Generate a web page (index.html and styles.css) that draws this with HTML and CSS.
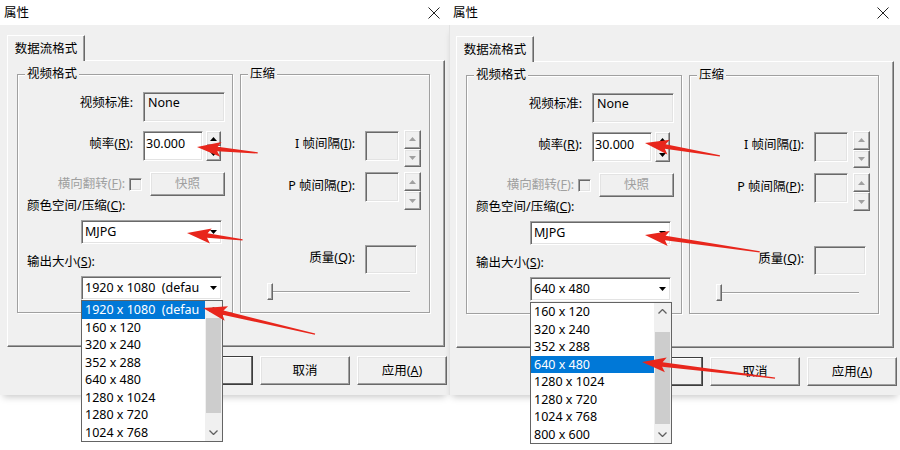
FILE: index.html
```html
<!DOCTYPE html>
<html lang="zh-CN">
<head>
<meta charset="utf-8">
<title>属性</title>
<link rel="stylesheet" href="styles.css">
</head>
<body>
<div class="screen">

  <div class="dialog d1">
    <div class="titlebar">
      <span class="title">属性</span>
      <svg class="close" width="12" height="12" viewBox="0 0 12 12"><path d="M0.5 0.5L11.5 11.5M11.5 0.5L0.5 11.5"/></svg>
    </div>
    <div class="client">
      <div class="tabs"><div class="tab">数据流格式</div></div>
      <div class="panel">
        <div class="group g-video">
          <span class="legend">视频格式</span>
          <div class="row r-std"><span class="lbl">视频标准:</span><div class="static sunken">None</div></div>
          <div class="row r-fps"><span class="lbl">帧率(<u>R</u>):</span><div class="edit sunken">30.000</div>
            <div class="spin"><span class="sbtn raised"><svg class="tri" width="7" height="4" viewBox="0 0 7 4"><path d="M0 4L3.5 0L7 4Z"/></svg></span><span class="sbtn raised"><svg class="tri" width="7" height="4" viewBox="0 0 7 4"><path d="M0 0L7 0L3.5 4Z"/></svg></span></div>
          </div>
          <div class="row r-flip"><span class="lbl lbl-flip dis">横向翻转(<u>F</u>):</span><span class="check sunken"></span><span class="btn raised snap dis">快照</span></div>
          <div class="line-lbl r-cs">颜色空间/压缩(<u>C</u>):</div>
          <div class="combo sunken"><span class="val">MJPG</span><span class="drop"><svg class="tri" width="7" height="4" viewBox="0 0 7 4"><path d="M0 0L7 0L3.5 4Z"/></svg></span></div>
          <div class="line-lbl r-out">输出大小(<u>S</u>):</div>
          <div class="combo sunken"><span class="val">1920 x 1080&nbsp;&nbsp;(defau</span><span class="drop"><svg class="tri" width="7" height="4" viewBox="0 0 7 4"><path d="M0 0L7 0L3.5 4Z"/></svg></span></div>
        </div>
        <div class="group g-comp">
          <span class="legend">压缩</span>
          <div class="row r-i"><span class="lbl lbl-c">I 帧间隔(<u>I</u>):</span><div class="edit sunken dedit"></div>
            <div class="spin spin2"><span class="sbtn raised"><svg class="tri gray" width="7" height="4" viewBox="0 0 7 4"><path d="M0 4L3.5 0L7 4Z"/></svg></span><span class="sbtn raised"><svg class="tri gray" width="7" height="4" viewBox="0 0 7 4"><path d="M0 0L7 0L3.5 4Z"/></svg></span></div>
          </div>
          <div class="row r-p"><span class="lbl lbl-c">P 帧间隔(<u>P</u>):</span><div class="edit sunken dedit"></div>
            <div class="spin spin2 spin3"><span class="sbtn raised"><svg class="tri gray" width="7" height="4" viewBox="0 0 7 4"><path d="M0 4L3.5 0L7 4Z"/></svg></span><span class="sbtn raised"><svg class="tri gray" width="7" height="4" viewBox="0 0 7 4"><path d="M0 0L7 0L3.5 4Z"/></svg></span></div>
          </div>
          <div class="row r-q"><span class="lbl lbl-c">质量(<u>Q</u>):</span><div class="edit sunken dedit qedit"></div></div>
          <div class="slider"><span class="thumb"></span><span class="track"></span></div>
        </div>
      </div>
      <div class="buttons">
        <span class="btn raised dbtn">确定</span>
        <span class="btn raised">取消</span>
        <span class="btn raised">应用(<u>A</u>)</span>
      </div>
    </div>
    <div class="droplist dl1">
      <div class="items">
        <div class="item sel">1920 x 1080&nbsp;&nbsp;(defau</div>
        <div class="item">160 x 120</div>
        <div class="item">320 x 240</div>
        <div class="item">352 x 288</div>
        <div class="item">640 x 480</div>
        <div class="item">1280 x 1024</div>
        <div class="item">1280 x 720</div>
        <div class="item">1024 x 768</div>
      </div>
      <div class="sbar">
        <span class="sarrow"><svg width="9" height="5" viewBox="0 0 9 5"><path d="M0.5 4.5L4.5 0.5L8.5 4.5"/></svg></span>
        <div class="strack"><div class="sthumb th1"></div></div>
        <span class="sarrow"><svg width="9" height="5" viewBox="0 0 9 5"><path d="M0.5 0.5L4.5 4.5L8.5 0.5"/></svg></span>
      </div>
    </div>
  </div>

  <div class="dialog d2">
    <div class="titlebar">
      <span class="title">属性</span>
      <svg class="close" width="12" height="12" viewBox="0 0 12 12"><path d="M0.5 0.5L11.5 11.5M11.5 0.5L0.5 11.5"/></svg>
    </div>
    <div class="client">
      <div class="tabs"><div class="tab">数据流格式</div></div>
      <div class="panel">
        <div class="group g-video">
          <span class="legend">视频格式</span>
          <div class="row r-std"><span class="lbl">视频标准:</span><div class="static sunken">None</div></div>
          <div class="row r-fps"><span class="lbl">帧率(<u>R</u>):</span><div class="edit sunken">30.000</div>
            <div class="spin"><span class="sbtn raised"><svg class="tri" width="7" height="4" viewBox="0 0 7 4"><path d="M0 4L3.5 0L7 4Z"/></svg></span><span class="sbtn raised"><svg class="tri" width="7" height="4" viewBox="0 0 7 4"><path d="M0 0L7 0L3.5 4Z"/></svg></span></div>
          </div>
          <div class="row r-flip"><span class="lbl lbl-flip dis">横向翻转(<u>F</u>):</span><span class="check sunken"></span><span class="btn raised snap dis">快照</span></div>
          <div class="line-lbl r-cs">颜色空间/压缩(<u>C</u>):</div>
          <div class="combo sunken"><span class="val">MJPG</span><span class="drop"><svg class="tri" width="7" height="4" viewBox="0 0 7 4"><path d="M0 0L7 0L3.5 4Z"/></svg></span></div>
          <div class="line-lbl r-out">输出大小(<u>S</u>):</div>
          <div class="combo sunken"><span class="val">640 x 480</span><span class="drop"><svg class="tri" width="7" height="4" viewBox="0 0 7 4"><path d="M0 0L7 0L3.5 4Z"/></svg></span></div>
        </div>
        <div class="group g-comp">
          <span class="legend">压缩</span>
          <div class="row r-i"><span class="lbl lbl-c">I 帧间隔(<u>I</u>):</span><div class="edit sunken dedit"></div>
            <div class="spin spin2"><span class="sbtn raised"><svg class="tri gray" width="7" height="4" viewBox="0 0 7 4"><path d="M0 4L3.5 0L7 4Z"/></svg></span><span class="sbtn raised"><svg class="tri gray" width="7" height="4" viewBox="0 0 7 4"><path d="M0 0L7 0L3.5 4Z"/></svg></span></div>
          </div>
          <div class="row r-p"><span class="lbl lbl-c">P 帧间隔(<u>P</u>):</span><div class="edit sunken dedit"></div>
            <div class="spin spin2 spin3"><span class="sbtn raised"><svg class="tri gray" width="7" height="4" viewBox="0 0 7 4"><path d="M0 4L3.5 0L7 4Z"/></svg></span><span class="sbtn raised"><svg class="tri gray" width="7" height="4" viewBox="0 0 7 4"><path d="M0 0L7 0L3.5 4Z"/></svg></span></div>
          </div>
          <div class="row r-q"><span class="lbl lbl-c">质量(<u>Q</u>):</span><div class="edit sunken dedit qedit"></div></div>
          <div class="slider"><span class="thumb"></span><span class="track"></span></div>
        </div>
      </div>
      <div class="buttons">
        <span class="btn raised dbtn">确定</span>
        <span class="btn raised">取消</span>
        <span class="btn raised">应用(<u>A</u>)</span>
      </div>
    </div>
    <div class="droplist dl2">
      <div class="items">
        <div class="item">160 x 120</div>
        <div class="item">320 x 240</div>
        <div class="item">352 x 288</div>
        <div class="item sel">640 x 480</div>
        <div class="item">1280 x 1024</div>
        <div class="item">1280 x 720</div>
        <div class="item">1024 x 768</div>
        <div class="item">800 x 600</div>
      </div>
      <div class="sbar">
        <span class="sarrow"><svg width="9" height="5" viewBox="0 0 9 5"><path d="M0.5 4.5L4.5 0.5L8.5 4.5"/></svg></span>
        <div class="strack"><div class="sthumb th2"></div></div>
        <span class="sarrow"><svg width="9" height="5" viewBox="0 0 9 5"><path d="M0.5 0.5L4.5 4.5L8.5 0.5"/></svg></span>
      </div>
    </div>
  </div>

</div>

<svg class="arrows" width="900" height="450" viewBox="0 0 900 450">
  <polygon transform="translate(197 147) rotate(5.6)" points="0,0 24,-7.5 20.5,-2.2 61,-0.6 61,0.6 20.5,2.2 24,7.5"/>
  <polygon transform="translate(187 233) rotate(7.1)" points="0,0 24,-7.5 20.5,-2.2 56,-0.6 56,0.6 20.5,2.2 24,7.5"/>
  <polygon transform="translate(203 308) rotate(13.1)" points="0,0 24,-7.5 20.5,-2.2 115,-0.6 115,0.6 20.5,2.2 24,7.5"/>
  <polygon transform="translate(645 143) rotate(9.8)" points="0,0 24,-7.5 20.5,-2.2 76,-0.6 76,0.6 20.5,2.2 24,7.5"/>
  <polygon transform="translate(645 235) rotate(8.4)" points="0,0 24,-7.5 20.5,-2.2 116,-0.6 116,0.6 20.5,2.2 24,7.5"/>
  <polygon transform="translate(642 362) rotate(6.9)" points="0,0 24,-7.5 20.5,-2.2 134,-0.6 134,0.6 20.5,2.2 24,7.5"/>
</svg>
</body>
</html>
```

FILE: styles.css
```css
* { box-sizing: border-box; }
html, body { margin: 0; padding: 0; }
body {
  width: 900px;
  height: 450px;
  overflow: hidden;
  position: relative;
  background: #fff;
  font-family: "Noto Sans", "Noto Sans CJK SC", sans-serif;
  font-size: 12.5px;
  line-height: 16px;
  color: #000;
}
u { text-decoration: underline; text-underline-offset: 1px; }

.screen { display: flex; align-items: flex-start; }

.dialog { position: relative; flex: none; width: 449px; }
.dialog.d2 { width: 451px; }

.titlebar {
  height: 25px;
  background: #fff;
  display: flex;
  align-items: center;
  justify-content: space-between;
  padding: 0 9px 0 4px;
}
.d2 .titlebar { padding: 1px 11px 0 4px; }
.close path { stroke: #222; stroke-width: 1; fill: none; }

.client {
  background: #f0f0f0;
  height: 370px;
  padding: 10px 0 0 7px;
  box-shadow: 0 5px 7px -3px rgba(0, 0, 0, 0.22);
}
.d2 .client { padding-top: 11px; border-left: 1px solid #e2e2e2; padding-left: 6px; }

.tabs { display: flex; }
.tab {
  position: relative;
  z-index: 1;
  width: 78px;
  height: 26px;
  margin-bottom: -1px;
  background: #f0f0f0;
  border-top: 1px solid #fff;
  border-left: 1px solid #fff;
  border-right: 1px solid #696969;
  box-shadow: inset -1px 0 0 #a0a0a0;
  display: flex;
  align-items: center;
  justify-content: center;
}

.panel {
  width: 438px;
  height: 287px;
  border-top: 1px solid #fff;
  border-left: 1px solid #fff;
  border-right: 1px solid #696969;
  border-bottom: 1px solid #696969;
  box-shadow: inset -1px -1px 0 #a0a0a0;
  display: flex;
  gap: 7px;
  padding: 13px 0 0 9px;
}

.group {
  position: relative;
  height: 239px;
  border: 1px solid #a0a0a0;
  box-shadow: inset 1px 1px 0 #fff, 1px 1px 0 #fff;
}
.g-video { width: 216px; }
.g-comp { width: 190px; }
.legend {
  position: absolute;
  top: -9px;
  left: 7px;
  padding: 0 2px;
  background: #f0f0f0;
  line-height: 16px;
}

.sunken {
  border-style: solid;
  border-width: 1px;
  border-color: #a0a0a0 #fff #fff #a0a0a0;
  box-shadow: inset 1px 1px 0 #696969, inset -1px -1px 0 #e3e3e3;
}
.raised {
  border-style: solid;
  border-width: 1px;
  border-color: #fff #696969 #696969 #fff;
  box-shadow: inset -1px -1px 0 #a0a0a0, inset 1px 1px 0 #e3e3e3;
  background: #f0f0f0;
}

.row { display: flex; align-items: flex-start; }
.lbl { width: 115px; margin-right: 10px; text-align: right; white-space: nowrap; padding-top: 3px; }
.dis { color: #a0a0a0; }

.r-std { margin-top: 17px; height: 30px; }
.static {
  width: 82px;
  height: 30px;
  background: #f0f0f0;
  padding: 2px 4px;
}

.r-fps { margin-top: 9px; height: 30px; }
.r-fps .lbl { padding-top: 5px; }
.edit {
  width: 60px;
  height: 30px;
  background: #fff;
  padding: 4px 2px;
}
.spin { display: flex; flex-direction: column; width: 15px; height: 30px; margin-left: 3px; }
.sbtn { flex: 1; display: flex; align-items: center; justify-content: center; }
.tri path { fill: #000; }
.tri.gray path { fill: #a0a0a0; }

.r-flip { margin-top: 11px; height: 24px; align-items: center; }
.lbl-flip { width: 107px; margin-right: 4px; padding-top: 0; }
.check { width: 13px; height: 13px; background: #f0f0f0; }
.btn {
  display: flex;
  align-items: center;
  justify-content: center;
  white-space: nowrap;
}
.snap { width: 75px; height: 24px; margin-left: 8px; }

.line-lbl { padding-left: 9px; white-space: nowrap; }
.r-cs { margin-top: 2px; }
.r-out { margin-top: 10px; }
.combo {
  display: flex;
  width: 141px;
  height: 24px;
  margin: 6px 0 0 63px;
  background: #fff;
}
.combo .val {
  flex: 1;
  white-space: nowrap;
  padding: 3px 0 0 3px;
}
.combo .drop { width: 16px; display: flex; align-items: center; justify-content: center; }

.lbl-c { width: 114px; padding-top: 6px; }
.dedit { width: 34px; background: #f0f0f0; margin-top: 1px; }
.r-i { margin-top: 55px; height: 37px; }
.r-p { margin-top: 5px; height: 38px; }
.r-p .dedit { margin-top: 0; }
.spin2 { width: 17px; height: 37px; margin-left: 5px; }
.spin3 { height: 38px; }
.r-q { margin-top: 35px; height: 29px; }
.r-q .lbl-c { padding-top: 5px; }
.qedit { width: 52px; height: 29px; margin-top: 0; }

.slider {
  display: flex;
  align-items: center;
  width: 143px;
  height: 17px;
  margin: 9px 0 0 26px;
}
.thumb {
  width: 6px;
  height: 17px;
  border-left: 1px solid #fff;
  border-top: 1px solid #fff;
  border-right: 1px solid #696969;
  border-bottom: 1px solid #696969;
  box-shadow: inset -1px -1px 0 #a0a0a0;
}
.track {
  flex: 1;
  height: 2px;
  border-top: 1px solid #a0a0a0;
  border-bottom: 1px solid #fff;
}

.buttons {
  display: flex;
  justify-content: flex-end;
  gap: 7px;
  margin-top: 9px;
  padding-right: 2px;
}
.d2 .buttons { padding-right: 3px; }
.buttons .btn { width: 90px; height: 29px; }
.dbtn { border-color: #3c3c3c; box-shadow: inset -1px -1px 0 #696969, inset 1px 1px 0 #fff; }

.droplist {
  position: absolute;
  left: 81px;
  top: 300px;
  width: 142px;
  height: 142px;
  z-index: 5;
  display: flex;
  background: #fff;
  border: 1px solid #646464;
}
.dl2 { top: 302px; }
.items { flex: 1; }
.item {
  height: 17.5px;
  line-height: 17.5px;
  padding-left: 3px;
  white-space: nowrap;
}
.item.sel { background: #0078d7; color: #fff; }
.sbar {
  width: 17px;
  display: flex;
  flex-direction: column;
  background: #f0f0f0;
}
.sarrow { height: 17px; flex: none; display: flex; align-items: center; justify-content: center; }
.sarrow path { fill: none; stroke: #606060; stroke-width: 1.3; }
.strack { flex: 1; padding: 0 1px; }
.sthumb { background: #cdcdcd; }
.th1 { height: 95px; }
.th2 { height: 92px; margin-top: 12px; }

.arrows {
  position: absolute;
  left: 0;
  top: 0;
  z-index: 20;
  pointer-events: none;
}
.arrows polygon { fill: #e8261c; }
```
